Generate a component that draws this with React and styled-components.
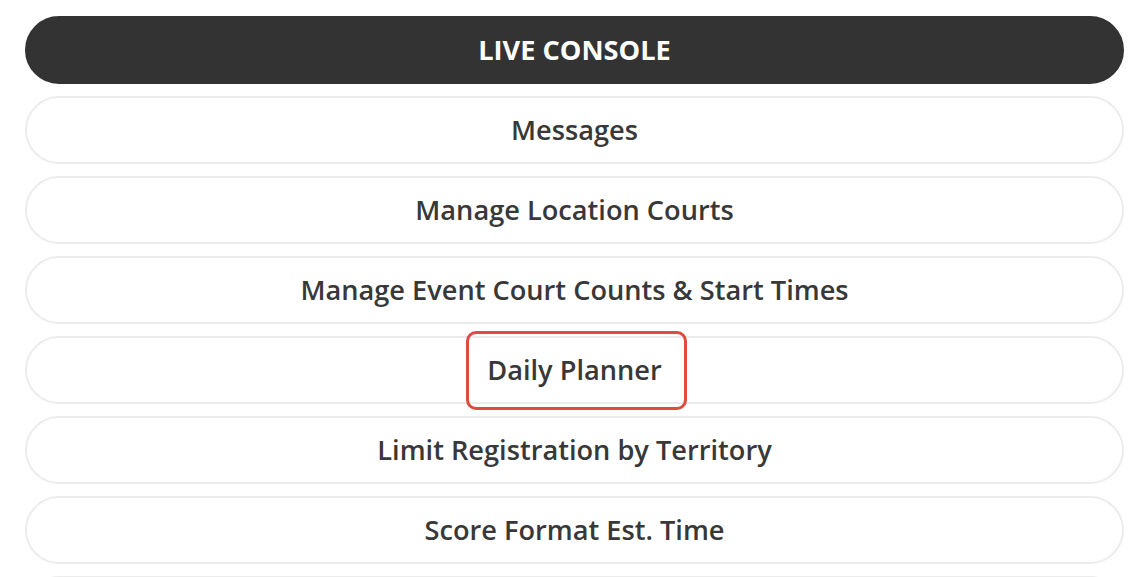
import React from 'react';
import styled, { createGlobalStyle } from 'styled-components';

const Global = createGlobalStyle`
  html, body {
    margin: 0;
    padding: 0;
    background: #ffffff;
  }
  body {
    font-family: 'Open Sans', 'Liberation Sans', sans-serif;
  }
`;

const Page = styled.div`
  display: flex;
  flex-direction: column;
  gap: 12px;
  padding: 16px 17px 0 25px;
  height: 577px;
  box-sizing: border-box;
  overflow: hidden;
`;

const MenuButton = styled.button`
  display: flex;
  align-items: center;
  justify-content: center;
  flex: none;
  height: 68px;
  width: 100%;
  padding: 0;
  border-radius: 34px;
  box-sizing: border-box;
  font-family: inherit;
  font-size: 27.2px;
  line-height: 36px;
  cursor: pointer;
  background: ${p => (p.$active ? '#333333' : '#ffffff')};
  color: ${p => (p.$active ? '#ffffff' : '#383838')};
  border: ${p => (p.$active ? '2px solid #333333' : '2px solid #ececec')};
  text-transform: ${p => (p.$active ? 'uppercase' : 'none')};
  font-weight: ${p => (p.$active ? 700 : 600)};
`;

const Label = styled.span`
  position: relative;
  &[data-highlight='true']::after {
    content: '';
    position: absolute;
    left: -21px;
    right: -25px;
    top: -21px;
    bottom: -22px;
    border: 3px solid #e04b3c;
    border-radius: 10px;
  }
`;

const items = [
  { label: 'Live Console', active: true },
  { label: 'Messages' },
  { label: 'Manage Location Courts' },
  { label: 'Manage Event Court Counts & Start Times' },
  { label: 'Daily Planner', highlight: true },
  { label: 'Limit Registration by Territory' },
  { label: 'Score Format Est. Time' },
  { label: '' },
];

export default function App() {
  return (
    <>
      <Global />
      <Page>
        {items.map((item, i) => (
          <MenuButton key={i} $active={item.active}>
            <Label data-highlight={item.highlight ? 'true' : 'false'}>{item.label}</Label>
          </MenuButton>
        ))}
      </Page>
    </>
  );
}
